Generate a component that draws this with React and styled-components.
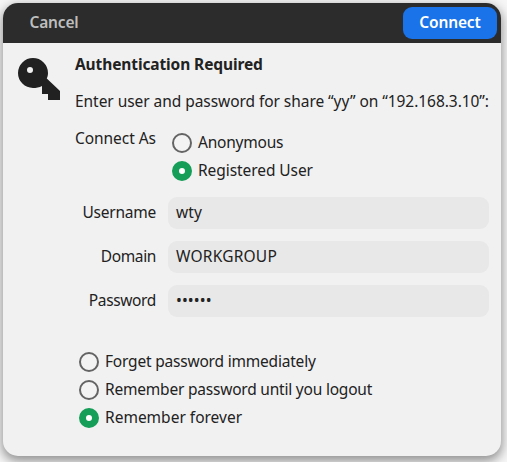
import React from 'react';
import styled, { createGlobalStyle } from 'styled-components';

const GlobalStyle = createGlobalStyle`
  * { box-sizing: border-box; }
  html, body { margin: 0; height: 100%; overflow: hidden; background: #f3f3f3; }
  #root { height: 100%; }
`;

const Desktop = styled.div`
  height: 462px;
  padding: 3px 6px 6px 3px;
  background: #f6f6f6;
  color: #222;
  font: 15.5px/20px "Noto Sans", "Open Sans", sans-serif;
`;

const Dialog = styled.main`
  height: 453px;
  display: flex;
  flex-direction: column;
  border-radius: 15px;
  overflow: hidden;
  background: #f1f1f1;
  box-shadow: 0 4px 11px 1px rgba(0, 0, 0, 0.42);
`;

const Header = styled.header`
  height: 40px;
  flex: none;
  display: flex;
  justify-content: space-between;
  align-items: center;
  padding: 0 4px 0 16px;
  background: #2c2c2c;
`;

const HeaderButton = styled.button`
  height: 32px;
  width: ${(p) => (p.$primary ? '94px' : '70px')};
  margin: 0;
  padding: 0 0 3px;
  border: 0;
  border-radius: 9px;
  background: ${(p) => (p.$primary ? '#1a73e8' : 'transparent')};
  color: ${(p) => (p.$primary ? '#fff' : '#bebebe')};
  font: 600 15.5px/20px "Noto Sans", sans-serif;
  letter-spacing: -0.16px;
  white-space: nowrap;
`;

const Body = styled.div`
  display: grid;
  grid-template-columns: 60px 414px;
  padding: 11px 0 0 12px;
`;

const KeyIcon = styled.svg`
  display: block;
  width: 48px;
  height: 48px;
`;

const Content = styled.div`
  display: flex;
  flex-direction: column;
`;

const Text = styled.span`
  display: block;
  white-space: nowrap;
  letter-spacing: ${(p) => p.$tracking || 0}px;
`;

const Title = styled.h1`
  margin: 0 0 17px;
  font-size: inherit;
  font-weight: 700;
  letter-spacing: -0.11px;
`;

const Message = styled.p`
  margin: 0 0 17px;
  white-space: nowrap;
  letter-spacing: -0.055px;
`;

const ConnectRow = styled.div`
  display: grid;
  grid-template-columns: 81px 1fr;
  column-gap: 16px;
`;

const RadioGroup = styled.div`
  display: flex;
  flex-direction: column;
  gap: 8px;
  padding: ${(p) => p.$inset || '0'};
`;

const RadioRow = styled.label`
  height: 20px;
  display: flex;
  align-items: flex-start;
  gap: 6px;
`;

const Dot = styled.span`
  flex: none;
  width: 20px;
  height: 20px;
  margin-top: 1px;
  border-radius: 50%;
  border: ${(p) => (p.$checked ? '7px solid #149e57' : '2px solid #646464')};
  background: ${(p) => (p.$checked ? '#fff' : '#f3f3f3')};
`;

const Fields = styled.div`
  display: flex;
  flex-direction: column;
  gap: 12px;
  margin: 17px 0 34px;
`;

const FieldRow = styled.div`
  display: grid;
  grid-template-columns: 81px 321px;
  column-gap: 12px;
  height: 32px;
`;

const FieldLabel = styled.label`
  padding-top: 5px;
  display: flex;
  justify-content: flex-end;
`;

const Field = styled.div`
  height: 32px;
  padding: 5px 8px 7px;
  border-radius: 9px;
  background: #e8e8e8;
`;

function Radio({ checked, tracking, children }) {
  return (
    <RadioRow>
      <Dot $checked={checked} />
      <Text $tracking={tracking}>{children}</Text>
    </RadioRow>
  );
}

function FormRow({ label, tracking, children }) {
  return (
    <FieldRow>
      <FieldLabel><Text $tracking={tracking}>{label}</Text></FieldLabel>
      <Field>{children}</Field>
    </FieldRow>
  );
}

export default function App() {
  return (
    <>
      <GlobalStyle />
      <Desktop>
        <Dialog>
          <Header>
            <HeaderButton>Cancel</HeaderButton>
            <HeaderButton $primary>Connect</HeaderButton>
          </Header>
          <Body>
            <KeyIcon viewBox="0 0 48 48" aria-hidden="true">
              <path
                fill="#212121"
                fillRule="evenodd"
                d="M18 4a15 15 0 0 1 15 15c0 2.200-.5 4.100-1.200 5.500L45 37V46H33v-6h-6v-8C24.400 33.600 21 34 18 34a15 15 0 0 1 0-30Zm-3 9a3 3 0 1 0 0 6a3 3 0 0 0 0-6Z"
              />
            </KeyIcon>
            <Content>
              <Title>Authentication Required</Title>
              <Message>Enter user and password for share “yy” on “192.168.3.10”:</Message>
              <ConnectRow>
                <Text $tracking={-0.06}>Connect As</Text>
                <RadioGroup $inset="4px 0 0">
                  <Radio tracking={-0.22}>Anonymous</Radio>
                  <Radio checked tracking={-0.07}>Registered User</Radio>
                </RadioGroup>
              </ConnectRow>
              <Fields>
                <FormRow label="Username" tracking={-0.24}><Text $tracking={0.1}>wty</Text></FormRow>
                <FormRow label="Domain" tracking={-0.38}><Text $tracking={0.22}>WORKGROUP</Text></FormRow>
                <FormRow label="Password" tracking={-0.37}>
                  <Text $tracking={0.1}>••••••</Text>
                </FormRow>
              </Fields>
              <RadioGroup $inset="0 0 0 4px">
                <Radio tracking={-0.2}>Forget password immediately</Radio>
                <Radio tracking={-0.21}>Remember password until you logout</Radio>
                <Radio checked tracking={0}>Remember forever</Radio>
              </RadioGroup>
            </Content>
          </Body>
        </Dialog>
      </Desktop>
    </>
  );
}
